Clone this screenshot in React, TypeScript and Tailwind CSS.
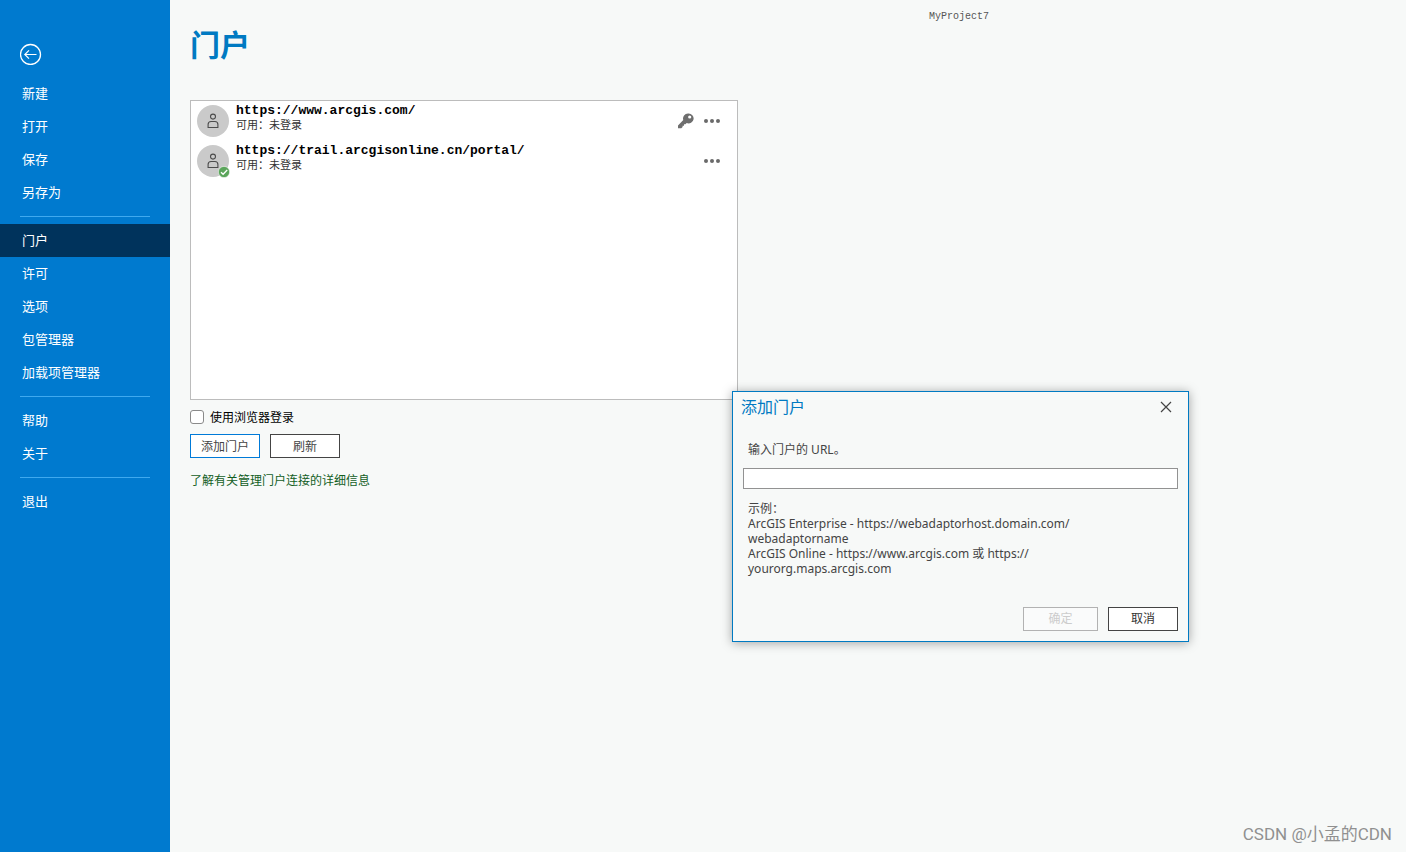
import React from "react";

interface MenuGroup {
    id: string;
    items: string[];
}

interface Portal {
    url: string;
    status: string;
    primary?: boolean;
    active?: boolean;
}

const menuGroups: MenuGroup[] = [
    { id: "file", items: ["新建", "打开", "保存", "另存为"] },
    { id: "settings", items: ["门户", "许可", "选项", "包管理器", "加载项管理器"] },
    { id: "help", items: ["帮助", "关于"] },
    { id: "exit", items: ["退出"] },
];

const portals: Portal[] = [
    { url: "https://www.arcgis.com/", status: "可用：未登录", primary: true },
    { url: "https://trail.arcgisonline.cn/portal/", status: "可用：未登录", active: true },
];

const BackIcon = () => (
    <svg width="22" height="22" viewBox="0 0 22 22" fill="none" stroke="currentColor">
        <circle cx="10.5" cy="11.5" r="10" strokeWidth="1.3" />
        <path d="M16.5 11.5H5M9 7.3L4.8 11.5l4.2 4.2" strokeWidth="1.2" />
    </svg>
);

const UserIcon = () => (
    <svg width="12" height="16" viewBox="0 0 12 16" fill="none" stroke="#4c4c4c" strokeWidth="1.1">
        <circle cx="6" cy="3.6" r="2.5" />
        <path d="M1.1 14.5v-3c0-1.8 1.2-3 3-3h3.8c1.8 0 3 1.2 3 3v3z" />
    </svg>
);

const KeyIcon = () => (
    <svg width="16" height="16" viewBox="0 0 16 16" fill="#6e6e6e">
        <path
            fillRule="evenodd"
            d="M10.3 0.5a5 5 0 1 1-1.6 9.6L7.4 11.3H6v1.5H4.6v1.3L3.3 15.2H0V12.4L5.3 7.1A5 5 0 0 1 10.3 0.5zM11.7 2.4a1.6 1.6 0 1 0 0 3.2 1.6 1.6 0 0 0 0-3.2z"
        />
    </svg>
);

const DotsIcon = () => (
    <svg width="16" height="4" viewBox="0 0 16 4" fill="#6a6a6a">
        <circle cx="2" cy="2" r="2" />
        <circle cx="8" cy="2" r="2" />
        <circle cx="14" cy="2" r="2" />
    </svg>
);

const CheckBadge = () => (
    <svg width="12" height="12" viewBox="0 0 12 12" className="absolute -right-px -bottom-px">
        <circle cx="6" cy="6" r="5.6" fill="#5ba55b" stroke="#fff" strokeWidth="0.5" />
        <path d="M3 6.2l2.1 2.1L9.2 4" fill="none" stroke="#fff" strokeWidth="1.3" />
    </svg>
);

const Sidebar = () => (
    <nav className="w-[170px] shrink-0 bg-[#007acf] text-white">
        <div className="px-5 pt-[43px] pb-3">
            <button type="button" aria-label="返回" className="block">
                <BackIcon />
            </button>
        </div>
        {menuGroups.map((group, index) => (
            <div key={group.id}>
                {index > 0 && <hr className="mx-5 my-[7px] border-t border-[#3fa9ef]" />}
                <ul>
                    {group.items.map((item) => (
                        <li key={item}>
                            <button
                                type="button"
                                className={`block h-[33px] w-full px-[22px] pb-0.5 text-left text-[13px] ${item === "门户" ? "bg-[#00335c]" : ""}`}
                            >
                                {item}
                            </button>
                        </li>
                    ))}
                </ul>
            </div>
        ))}
    </nav>
);

const PortalRow = ({ portal }: { portal: Portal }) => (
    <li className="flex h-10 items-center pr-[17px] pl-1.5">
        <div className="relative flex size-8 shrink-0 items-center justify-center rounded-full bg-[#cacaca]">
            <UserIcon />
            {portal.active && <CheckBadge />}
        </div>
        <div className="ml-[7px] flex-1 self-start pt-[3px]">
            <h2 className="font-['Liberation_Mono','Noto_Sans_CJK_SC',monospace] text-[13px] leading-[14px] font-bold">
                {portal.url}
            </h2>
            <p className="text-[11px] leading-[13px] text-[#333333]">{portal.status}</p>
        </div>
        {portal.primary && (
            <button type="button" aria-label="主门户" className="mr-2.5">
                <KeyIcon />
            </button>
        )}
        <button type="button" aria-label="更多" className="flex h-4 items-center">
            <DotsIcon />
        </button>
    </li>
);

const AddPortalDialog = () => (
    <div
        role="dialog"
        aria-labelledby="dialog-title"
        className="absolute top-[391px] left-[732px] w-[457px] border border-[#007ac2] bg-[#f7f9f8] px-2.5 pb-2.5 font-['Noto_Sans','Noto_Sans_CJK_SC',sans-serif] text-xs text-[#444444] shadow-[0_1px_10px_rgba(0,0,0,0.35)]"
    >
        <div className="flex h-[30px] items-center justify-between pr-1.5">
            <h2 id="dialog-title" className="-ml-0.5 pb-0.5 font-['Noto_Sans_CJK_SC',sans-serif] text-base text-[#007ac2]">
                添加门户
            </h2>
            <button type="button" aria-label="关闭">
                <svg width="12" height="12" viewBox="0 0 12 12" stroke="#444444" strokeWidth="1.2">
                    <path d="M1 1l10 10M11 1L1 11" />
                </svg>
            </button>
        </div>
        <label htmlFor="portal-url" className="mt-[19px] block px-[5px] leading-[18px]">
            输入门户的 URL。
        </label>
        <input
            id="portal-url"
            type="text"
            className="mt-[9px] block h-[21px] w-full border border-[#929292] bg-white px-1 outline-none"
        />
        <p className="mt-3 px-[5px] leading-[15px]">
            示例：
            <br />
            ArcGIS Enterprise - https://webadaptorhost.domain.com/
            <br />
            webadaptorname
            <br />
            ArcGIS Online - https://www.arcgis.com 或 https://
            <br />
            yourorg.maps.arcgis.com
        </p>
        <div className="mt-[31px] flex justify-end gap-2.5">
            <button type="button" disabled className="h-6 w-[75px] border border-[#b2b2b2] bg-[#fafbfb] text-[#cccccc]">
                确定
            </button>
            <button type="button" className="h-6 w-[70px] border border-[#444444] bg-white text-[#333333]">
                取消
            </button>
        </div>
    </div>
);

const App = () => {
    return (
        <div className="relative flex min-h-screen bg-[#f7f9f8] font-['Noto_Sans_CJK_SC',sans-serif] text-black">
            <Sidebar />
            <main className="min-w-0 flex-1 px-5 pt-[22px]">
                <h1 className="text-[30px] leading-[42px] font-bold text-[#007ac2]">门户</h1>
                <ul className="mt-9 h-[300px] w-full max-w-[548px] border border-[#bcbcbc] bg-white">
                    {portals.map((portal) => (
                        <PortalRow key={portal.url} portal={portal} />
                    ))}
                </ul>
                <div className="mt-2 flex h-[18px] items-center gap-1.5 text-xs">
                    <input
                        id="browser-login"
                        type="checkbox"
                        className="size-3.5 appearance-none rounded-[3px] border border-[#8a8a8a] bg-white"
                    />
                    <label htmlFor="browser-login">使用浏览器登录</label>
                </div>
                <div className="mt-2 flex gap-2.5 text-xs text-[#444444]">
                    <button type="button" className="h-6 w-[70px] border border-[#007ad8] bg-white">
                        添加门户
                    </button>
                    <button type="button" className="h-6 w-[70px] border border-[#444444] bg-white">
                        刷新
                    </button>
                </div>
                <a href="#portal-help" className="mt-[13px] inline-block text-xs leading-[18px] text-[#135e1f]">
                    了解有关管理门户连接的详细信息
                </a>
            </main>
            <div className="absolute top-2 left-[929px] font-['Liberation_Mono',monospace] text-[10px] leading-[18px] text-[#555555]">
                MyProject7
            </div>
            <AddPortalDialog />
            <div className="absolute right-3.5 bottom-1.5 font-['Roboto','Noto_Sans_CJK_SC',sans-serif] text-[17px] leading-6 text-[#909090]">
                CSDN @小孟的CDN
            </div>
        </div>
    );
};

export default App;
